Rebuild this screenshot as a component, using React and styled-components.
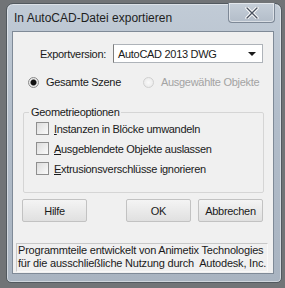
import styled, { createGlobalStyle } from 'styled-components'

const Global = createGlobalStyle`
	html, body {
		margin: 0;
		padding: 0;
		background: #717477;
		overflow: hidden;
	}
	body {
		font-family: 'Liberation Sans', Arial, sans-serif;
		font-size: 11px;
		letter-spacing: -0.3px;
		color: #1a1a1a;
	}
`

export default function App() {
	return (
		<>
			<Global />
			<Desk>
				<Window>
					<TitleBar>
						<Title>In AutoCAD-Datei exportieren</Title>
						<CloseButton>
							<svg width="14" height="12" viewBox="0 0 14 12">
								<path
									d="M2 1 L12 11 M12 1 L2 11"
									stroke="#fff"
									strokeWidth="3.2"
									strokeLinecap="round"
								/>
								<path
									d="M2 1 L12 11 M12 1 L2 11"
									stroke="#4a5260"
									strokeWidth="1.4"
									strokeLinecap="round"
								/>
							</svg>
						</CloseButton>
					</TitleBar>
					<Client>
						<VersionRow>
							<Label>Exportversion:</Label>
							<Select>
								<span>AutoCAD 2013 DWG</span>
								<Arrow />
							</Select>
						</VersionRow>
						<RadioRow>
							<Radio>
								<RadioDot checked />
								<span>Gesamte Szene</span>
							</Radio>
							<Radio disabled>
								<RadioDot disabled />
								<span>Ausgewählte Objekte</span>
							</Radio>
						</RadioRow>
						<Group>
							<Legend>Geometrieoptionen</Legend>
							<Check>
								<Box />
								<span>
									<u>I</u>nstanzen in Blöcke umwandeln
								</span>
							</Check>
							<Check>
								<Box />
								<span>
									<u>A</u>usgeblendete Objekte auslassen
								</span>
							</Check>
							<Check>
								<Box />
								<span>
									<u>E</u>xtrusionsverschlüsse ignorieren
								</span>
							</Check>
						</Group>
						<Buttons>
							<Button>Hilfe</Button>
							<Spacer />
							<Button>OK</Button>
							<Button>Abbrechen</Button>
						</Buttons>
						<Credits>
							Programmteile entwickelt von Animetix Technologies
							<br />
							für die ausschließliche Nutzung durch&nbsp; Autodesk, Inc.
						</Credits>
					</Client>
				</Window>
			</Desk>
		</>
	)
}

const Desk = styled.div`
	width: 285px;
	height: 288px;
	padding: 3px 0 0 6px;
	box-sizing: border-box;
`
const Window = styled.div`
	width: 276px;
	height: 280px;
	box-sizing: border-box;
	border: 1px solid #52595f;
	border-radius: 7px 7px 5px 5px;
	background: linear-gradient(#c1cbd6, #b2bdca 40%, #a9b4c1);
	box-shadow: inset 0 0 0 1px rgba(255, 255, 255, 0.45);
	display: flex;
	flex-direction: column;
	padding: 0 7px 8px 5px;
`
const TitleBar = styled.div`
	height: 27px;
	display: flex;
	align-items: flex-start;
	justify-content: space-between;
`
const Title = styled.div`
	font-family: 'Liberation Sans', Arial, sans-serif;
	font-size: 12px;
	letter-spacing: 0;
	color: #1e1e1e;
	padding: 7px 0 0 2px;
`
const CloseButton = styled.div`
	width: 47px;
	height: 20px;
	margin-top: -1px;
	margin-right: -1px;
	box-sizing: border-box;
	border: 1px solid #7d8896;
	border-top: none;
	border-radius: 0 0 4px 4px;
	background: linear-gradient(#c6cfd9, #b3bdc9);
	box-shadow: inset 0 0 0 1px rgba(255, 255, 255, 0.5);
	display: flex;
	align-items: center;
	justify-content: center;
`
const Client = styled.div`
	flex: 1;
	min-width: 0;
	background: #f0f0f0;
	border: 1px solid #7f8a97;
	display: flex;
	flex-direction: column;
	padding: 12px 5px 1px 2px;
`
const VersionRow = styled.div`
	display: flex;
	align-items: center;
	height: 19px;
`
const Label = styled.div`
	width: 91px;
	text-align: right;
	margin-right: 7px;
`
const Select = styled.div`
	width: 150px;
	height: 19px;
	box-sizing: border-box;
	border: 1px solid #aeb3b9;
	border-left-color: #7d7d7d;
	background: #fff;
	display: flex;
	align-items: center;
	justify-content: space-between;
	padding: 0 6px 0 4px;
`
const Arrow = styled.div`
	width: 0;
	height: 0;
	border-left: 4px solid transparent;
	border-right: 4px solid transparent;
	border-top: 4px solid #1a1a1a;
`
const RadioRow = styled.div`
	display: flex;
	margin-top: 12px;
	padding-left: 13px;
	height: 14px;
	align-items: center;
`
const Radio = styled.label`
	display: flex;
	align-items: center;
	gap: 7px;
	width: 115px;
	white-space: nowrap;
	color: ${(p) => (p.disabled ? '#a3a3a3' : '#1a1a1a')};
`
const RadioDot = styled.span`
	width: 11px;
	height: 11px;
	flex: none;
	border-radius: 50%;
	box-sizing: border-box;
	border: 1px solid ${(p) => (p.disabled ? '#d0d0d0' : '#8a8a8a')};
	background: ${(p) =>
		p.checked
			? 'radial-gradient(circle, #111 0 2.5px, #e8e8e8 3.5px)'
			: 'radial-gradient(circle, #fafafa, #e6e6e6)'};
`
const Group = styled.fieldset`
	margin: 17px 0 0 8px;
	padding: 4px 0 17px 12px;
	border: 1px solid #d5d5d5;
	border-radius: 2px;
	display: flex;
	flex-direction: column;
	gap: 7px;
	width: 241px;
	box-sizing: border-box;
	min-width: 0;
`
const Legend = styled.legend`
	padding: 0 2px;
	margin-left: -7px;
`
const Check = styled.label`
	display: flex;
	align-items: center;
	gap: 5px;
	height: 13px;
	white-space: nowrap;
`
const Box = styled.span`
	width: 13px;
	height: 13px;
	flex: none;
	box-sizing: border-box;
	border: 1px solid #8f8f8f;
	background: linear-gradient(135deg, #dcdcdc, #fbfbfb);
`
const Buttons = styled.div`
	display: flex;
	gap: 7px;
	margin: 6px 5px 0 7px;
`
const Spacer = styled.div`
	flex: 1;
`
const Button = styled.div`
	width: 65px;
	height: 23px;
	box-sizing: border-box;
	border: 1px solid #c2c2c2;
	border-radius: 2px;
	background: linear-gradient(#f4f4f4, #eaeaea 50%, #e0e0e0);
	display: flex;
	align-items: center;
	justify-content: center;
`
const Credits = styled.div`
	margin: auto 0 0 1px;
	border: 1px solid #c8c8c8;
	border-right-color: #f8f8f8;
	border-bottom-color: #f8f8f8;
	padding: 0 0 1px 1px;
	font-size: 11px;
	letter-spacing: -0.2px;
	line-height: 13px;
	white-space: nowrap;
	overflow: hidden;
`
